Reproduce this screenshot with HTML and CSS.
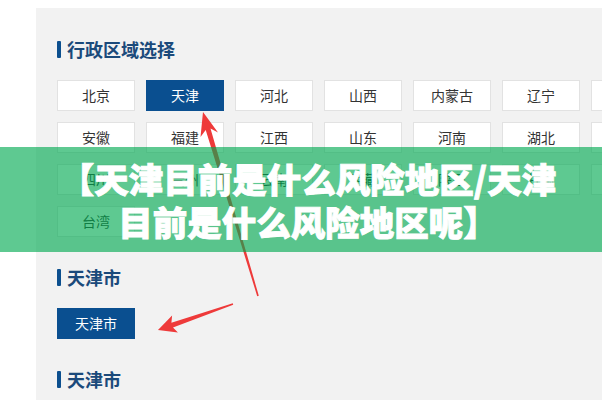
FILE: index.html
```html
<!DOCTYPE html>
<html lang="zh-CN">
<head>
<meta charset="utf-8">
<title>天津目前是什么风险地区</title>
<link rel="stylesheet" href="styles.css">
</head>
<body>
<div class="page">
  <div class="panel">
    <section class="sec">
      <h2 class="sec-title">行政区域选择</h2>
      <div class="grid">
        <span class="btn">北京</span><span class="btn active">天津</span><span class="btn">河北</span><span class="btn">山西</span><span class="btn">内蒙古</span><span class="btn">辽宁</span><span class="btn">吉林</span><span class="btn">黑龙江</span><span class="btn">上海</span><span class="btn">江苏</span><span class="btn">浙江</span>
        <span class="btn">安徽</span><span class="btn">福建</span><span class="btn">江西</span><span class="btn">山东</span><span class="btn">河南</span><span class="btn">湖北</span><span class="btn">湖南</span><span class="btn">广东</span><span class="btn">广西</span><span class="btn">海南</span><span class="btn">重庆</span>
        <span class="btn">四川</span><span class="btn">贵州</span><span class="btn">云南</span><span class="btn">西藏</span><span class="btn">陕西</span><span class="btn">甘肃</span><span class="btn">青海</span><span class="btn">宁夏</span><span class="btn">新疆</span><span class="btn">香港</span><span class="btn">澳门</span>
        <span class="btn">台湾</span>
      </div>
    </section>
    <section class="sec">
      <h2 class="sec-title">天津市</h2>
      <div class="grid">
        <span class="btn active">天津市</span>
      </div>
    </section>
    <section class="sec">
      <h2 class="sec-title">天津市</h2>
    </section>
  </div>

  <svg class="arrows" width="602" height="400" viewBox="0 0 602 400" aria-hidden="true">
    <polygon fill="#ee3a3a" points="203,112 218,132.5 210.5,128.5 258.8,295.8 257.2,296.2 205.7,129.9 200.5,137"/>
    <polygon fill="#ee3a3a" points="158,330 177.9,332.6 173,327.5 233.2,304.7 232.8,303.3 171.4,322.7 172.1,315.6"/>
  </svg>

  <div class="band">
    <p class="band-title">【天津目前是什么风险地区/天津<br>目前是什么风险地区呢】</p>
  </div>
</div>
</body>
</html>
```
FILE: styles.css
```css
html, body {
  margin: 0;
  padding: 0;
  background: #ffffff;
  overflow: hidden;
}

.page {
  position: relative;
  width: 602px;
  height: 400px;
  box-sizing: border-box;
  padding: 8px 0 0 36px;
  font-family: "Noto Sans CJK SC", "Noto Sans", sans-serif;
  overflow: hidden;
}

.panel {
  background: #f2f2f2;
  height: 100%;
  box-sizing: border-box;
  padding: 29px 0 0 21px;
  overflow: hidden;
}

.sec {
  margin-bottom: 28px;
}

.sec-title {
  display: flex;
  align-items: center;
  gap: 6px;
  margin: 0 0 19px 0;
  height: 24px;
  font-size: 18px;
  font-weight: 700;
  color: #1b4a7b;
  line-height: 24px;
}

.sec-title::before {
  content: "";
  width: 4px;
  height: 17px;
  border-radius: 1px;
  background: #0c4f8e;
}

.grid {
  display: grid;
  grid-template-columns: repeat(11, 78px);
  column-gap: 11px;
  row-gap: 11px;
  width: 968px;
}

.btn {
  box-sizing: border-box;
  height: 31px;
  line-height: 29px;
  border: 1px solid #e2e2e2;
  background: #ffffff;
  color: #333333;
  font-size: 14px;
  text-align: center;
  white-space: nowrap;
}

.btn.active {
  background: #0a4f90;
  border-color: #0a4f90;
  color: #ffffff;
}

.arrows {
  position: absolute;
  left: 0;
  top: 0;
}

.band {
  position: absolute;
  left: 0;
  right: 0;
  top: 147px;
  height: 105px;
  background: rgba(0, 170, 80, 0.63);
  display: flex;
  align-items: center;
  justify-content: center;
  padding-left: 14px;
  box-sizing: border-box;
}

.band-title {
  margin: 0;
  color: #ffffff;
  font-size: 34.5px;
  font-weight: 900;
  line-height: 43px;
  text-align: center;
  white-space: nowrap;
  -webkit-text-stroke: 0.9px #ffffff;
}
```
